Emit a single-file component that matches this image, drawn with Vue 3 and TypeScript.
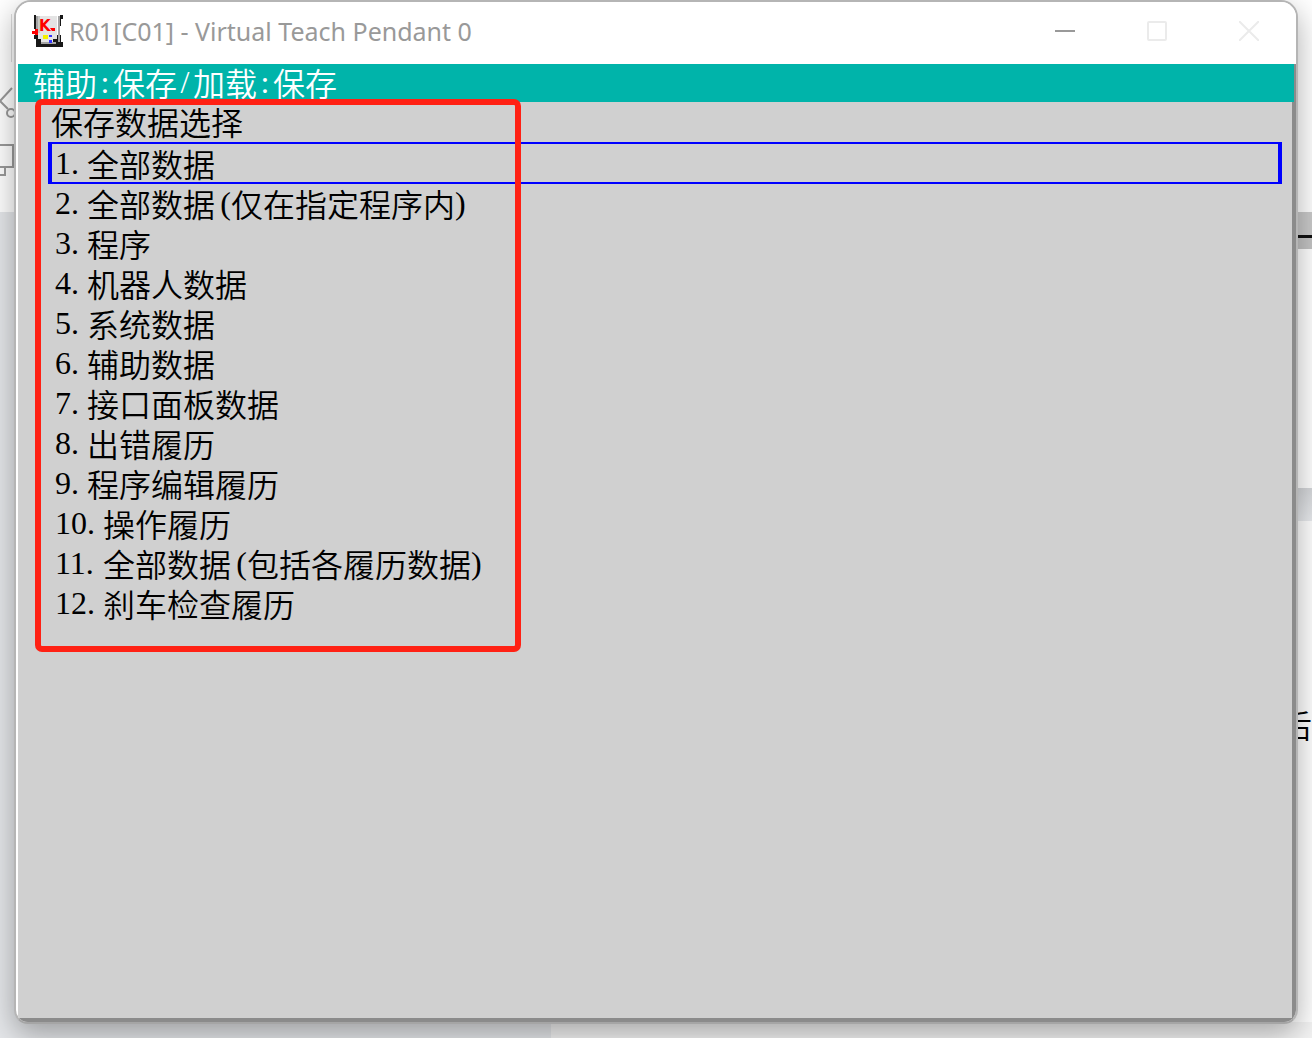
<script setup lang="ts">
import { ref } from 'vue'

interface MenuItem {
  no: number
  label: string
  note?: string
}

const path: string[] = ['辅助', ':', '保存', '/', '加载', ':', '保存']
const items: MenuItem[] = [
  { no: 1, label: '全部数据' },
  { no: 2, label: '全部数据', note: '仅在指定程序内' },
  { no: 3, label: '程序' },
  { no: 4, label: '机器人数据' },
  { no: 5, label: '系统数据' },
  { no: 6, label: '辅助数据' },
  { no: 7, label: '接口面板数据' },
  { no: 8, label: '出错履历' },
  { no: 9, label: '程序编辑履历' },
  { no: 10, label: '操作履历' },
  { no: 11, label: '全部数据', note: '包括各履历数据' },
  { no: 12, label: '刹车检查履历' },
]
const selected = ref<number>(1)
</script>

<template>
  <div class="desktop">
    <div class="backdrop" aria-hidden="true">
      <div class="ribbon">
        <svg class="tools" width="16" height="200" viewBox="0 0 16 200" fill="none" stroke="#9a9a9a" stroke-width="2">
          <path d="M11.500 14V62" stroke="#dcdcdc" stroke-width="1" />
          <path d="M12 88L0 101L8 109" />
          <circle cx="11" cy="113" r="4" />
          <path d="M0 145H13V167H0M5 167V175H0" />
        </svg>
      </div>
      <div class="sheet">
        <div class="rule"></div>
        <div class="band"></div>
        <span class="word">后</span>
      </div>
      <div class="page"></div>
    </div>

    <main class="window">
      <header class="titlebar">
        <svg class="app-icon" width="32" height="32" viewBox="0 0 32 32">
          <path d="M2 0H4V14H2ZM28 0H31V4H29V11H28V20H29V27H31V32H4V24H2V20H28Z" fill="#181818" />
          <path d="M6 1H25V24H21V27H9V24H6Z" fill="#e4e4e4" />
          <path d="M5 1V18M27 1V27M9 28H24" stroke="#a4a4a4" stroke-width="2" />
          <path d="M7 1V18" stroke="#c8c8c8" stroke-width="2" />
          <text x="7" y="16" font-family="DejaVu Sans" font-weight="700" font-size="15" fill="#f00">K</text>
          <path d="M18 13H23V16H20Z" fill="#f00" />
          <path d="M0 16H3V14H6V20H3V19H0Z" fill="#f00" />
          <path d="M11 20H16V24H11Z" fill="#f4f000" />
          <path d="M17 20H20V22H17ZM17 25H20V28H17Z" fill="#33f" />
        </svg>
        <h1 class="title">R01[C01] - Virtual Teach Pendant 0</h1>
        <div class="controls">
          <button type="button" aria-label="Minimize">
            <svg width="20" height="20" viewBox="0 0 20 20"><path d="M0 10H20" stroke="#999" stroke-width="2" /></svg>
          </button>
          <button type="button" aria-label="Maximize" disabled>
            <svg width="20" height="20" viewBox="0 0 20 20"><rect x="1" y="1" width="18" height="18" rx="1" fill="none" stroke="#ebebeb" stroke-width="2" /></svg>
          </button>
          <button type="button" aria-label="Close" disabled>
            <svg width="20" height="20" viewBox="0 0 20 20"><path d="M0 0L20 20M20 0L0 20" stroke="#ebebeb" stroke-width="2" /></svg>
          </button>
        </div>
      </header>

      <div class="client">
        <nav class="path">
          <span v-for="(part, i) in path" :key="i" :class="{ half: part.length === 1 }">{{ part }}</span>
        </nav>
        <section class="menu">
          <h2>保存数据选择</h2>
          <ol>
            <li v-for="item in items" :key="item.no">
              <button type="button" :class="{ selected: item.no === selected }" @click="selected = item.no">
                <span class="no" :class="{ wide: item.no > 9 }">{{ item.no }}.</span>
                <span>{{ item.label }}</span>
                <template v-if="item.note"><span class="half open">(</span><span>{{ item.note }}</span><span class="half close">)</span></template>
              </button>
            </li>
          </ol>
          <div class="marker"></div>
        </section>
      </div>
    </main>
  </div>
</template>

<style>
body {
  margin: 0;
}
</style>

<style scoped>
.desktop {
  position: relative;
  box-sizing: border-box;
  min-height: 100vh;
  padding: 0 14px 14px;
  display: flex;
  overflow: hidden;
  background: #e5e7ea;
  font-family: "Noto Sans CJK SC", sans-serif;
}
.backdrop {
  position: absolute;
  inset: 0;
}
.ribbon {
  height: 212px;
  background: #fff;
}
.tools {
  display: block;
}
.sheet {
  position: absolute;
  top: 212px;
  right: 0;
  bottom: 0;
  width: 32px;
  background: #fff;
}
.rule {
  height: 37px;
  background: linear-gradient(#cacaca 0 23px, #111 23px 26px, #c4c4c4 26px);
}
.band {
  margin-top: 239px;
  height: 33px;
  background: linear-gradient(#d5d7da, #e9ebee);
}
.word {
  display: block;
  margin-top: 183px;
  font-size: 32px;
  font-weight: 350;
  line-height: 40px;
  color: #000;
}
.page {
  position: absolute;
  left: 42%;
  right: 0;
  bottom: 0;
  height: 16px;
  background: #f4f4f4;
}
.window {
  position: relative;
  box-sizing: border-box;
  flex: 1;
  min-width: 0;
  display: flex;
  flex-direction: column;
  border: 2px solid #b5b5b5;
  border-bottom-color: #a5a5a5;
  border-radius: 17px 17px 14px 14px;
  background: #fff;
  box-shadow: 0 10px 30px rgba(0, 0, 0, 0.32);
  overflow: hidden;
}
.titlebar {
  display: flex;
  align-items: center;
  height: 62px;
  padding: 0 1px 4px 16px;
  box-sizing: border-box;
  background: #fff;
}
.app-icon {
  flex: none;
}
.title {
  flex: 1;
  margin: 0 0 0 5px;
  font-family: "Noto Sans", sans-serif;
  font-size: 25px;
  font-weight: 400;
  line-height: 30px;
  color: #999;
  white-space: nowrap;
}
.controls {
  display: flex;
}
.controls button {
  width: 92px;
  height: 56px;
  padding: 0;
  border: 0;
  background: none;
  display: flex;
  align-items: center;
  justify-content: center;
}
.client {
  flex: 1;
  margin-left: 2px;
  border-right: 4px solid #8b8b8b;
  border-bottom: 4px solid #8b8b8b;
  background: #d0d0d0;
  font-size: 32px;
  font-weight: 350;
  color: #000;
}
.path {
  display: flex;
  height: 38px;
  margin-right: -2px;
  padding-left: 15px;
  background: #00b4aa;
  color: #fff;
  line-height: 36px;
}
.half {
  width: 16px;
  font-family: "Liberation Serif", serif;
  text-align: center;
}
.open {
  text-align: right;
}
.close {
  text-align: left;
}
.menu {
  position: relative;
  padding: 0 10px 0 30px;
}
.menu h2 {
  height: 40px;
  margin: 0 0 0 3px;
  font-size: 32px;
  font-weight: 350;
  line-height: 38px;
}
.menu ol {
  margin: 0;
  padding: 0;
  list-style: none;
}
.menu button {
  box-sizing: border-box;
  display: flex;
  width: 100%;
  height: 40px;
  margin: 0;
  padding: 0 3px;
  border: 0 solid transparent;
  border-width: 0 4px;
  background: none;
  color: inherit;
  font: inherit;
  line-height: 38px;
  text-align: left;
  white-space: nowrap;
}
.menu button.selected {
  height: 42px;
  border: 2px solid #00f;
  border-width: 2px 4px;
}
.no {
  width: 32px;
  font-family: "Liberation Serif", serif;
}
.no.wide {
  width: 48px;
}
.marker {
  position: absolute;
  top: -3px;
  left: 17px;
  width: 486px;
  height: 553px;
  box-sizing: border-box;
  border: 6px solid #ff2114;
  border-radius: 7px;
  pointer-events: none;
}
</style>
